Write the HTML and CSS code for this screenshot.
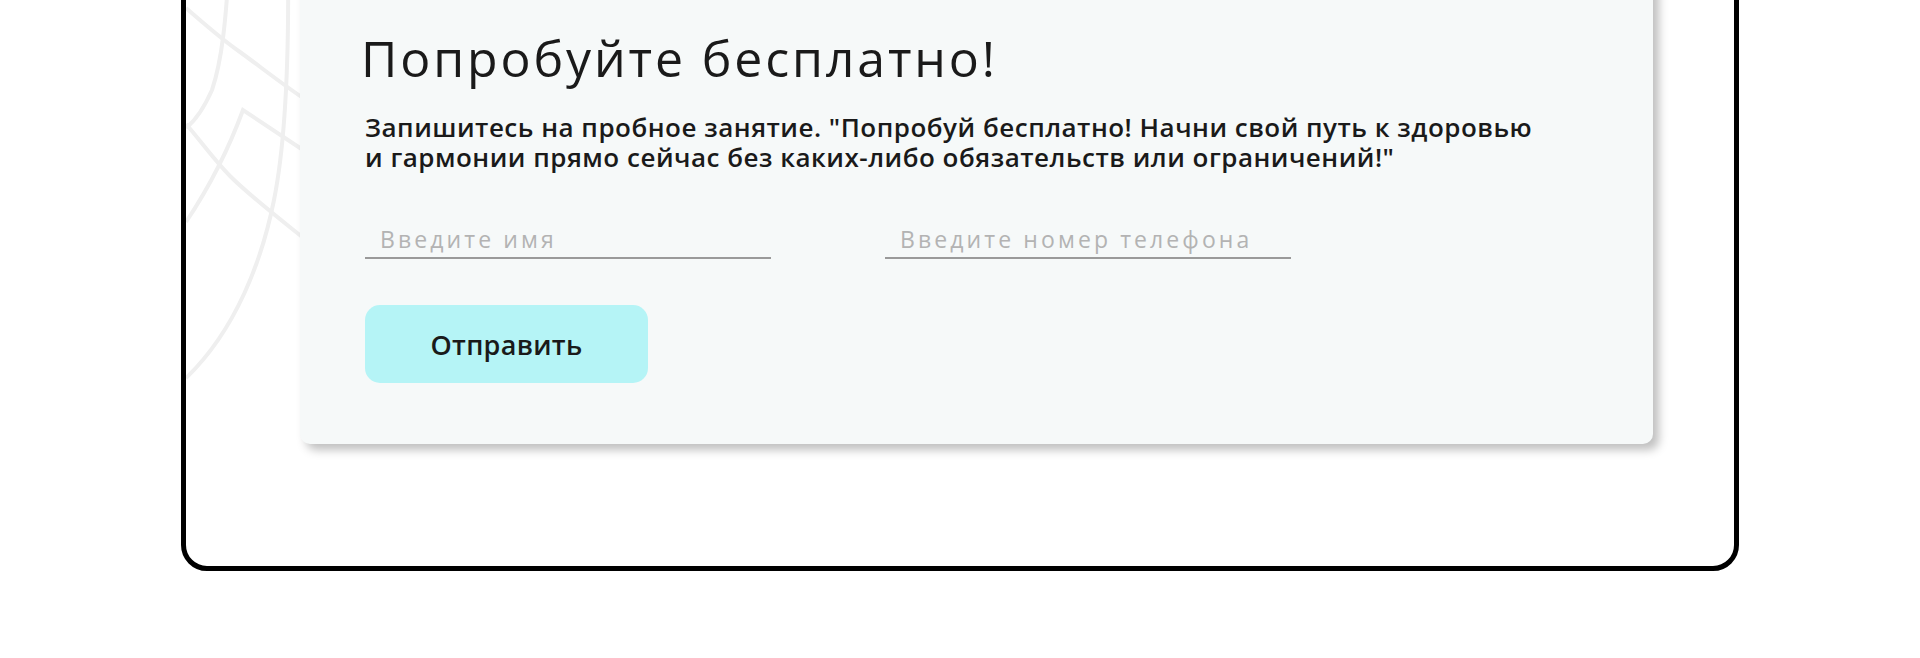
FILE: index.html
```html
<!DOCTYPE html>
<html lang="ru">
<head>
  <meta charset="UTF-8" />
  <meta name="viewport" content="width=device-width, initial-scale=1.0"/>
  <title>Попробуйте бесплатно</title>
  <link rel="stylesheet" href="styles.css">
</head>
<body>
  <section class="frame">
    <!-- decorative globe lines behind the card -->
    <svg class="deco" viewBox="186 -35 120 450" width="120" height="450" aria-hidden="true">
      <g fill="none" stroke="#efefef" stroke-width="4">
        <path d="M229 -35 C226 20 222 60 212 90 C204 108 196 120 186 128" />
        <path d="M288 -35 C289 60 286 140 274 200 C262 260 236 330 186 378" />
        <path d="M186 8 C200 20 220 38 240 52 C262 68 282 84 306 100" />
        <path d="M306 152 L243 110 C232 140 214 180 186 222" />
        <path d="M186 124 C200 140 214 160 230 176 C250 196 276 216 306 240" />
      </g>
    </svg>

    <div class="card">
      <h1>Попробуйте бесплатно!</h1>
      <p class="lead">Запишитесь на пробное занятие. "Попробуй бесплатно! Начни свой путь к здоровью и гармонии прямо сейчас без каких-либо обязательств или ограничений!"</p>
      <form class="trial-form" onsubmit="return false">
        <div class="fields">
          <input class="field" type="text" placeholder="Введите имя">
          <input class="field" type="tel" placeholder="Введите номер телефона">
        </div>
        <button class="btn" type="submit">Отправить</button>
      </form>
    </div>
  </section>
</body>
</html>
```

FILE: styles.css
```css
body {
  margin: 0;
  background: #fff;
  color: #1a1a1a;
  font-family: 'Open Sans', 'Noto Sans', sans-serif;
}
.frame {
  position: relative;
  box-sizing: border-box;
  width: 1558px;
  margin: -40px auto 0;
  padding: 0 81px 122px 114px;
  border: 5px solid #000;
  border-radius: 26px;
}
.deco {
  position: absolute;
  left: 0;
  top: 0;
}
.card {
  position: relative;
  background: #f6f9f9;
  border-radius: 10px;
  box-shadow: 6px 6px 10px rgba(0, 0, 0, 0.25);
  padding: 63px 62px 61px 65px;
}
h1 {
  margin: 0 0 0 -4px;
  font-size: 50px;
  font-weight: 400;
  line-height: 60px;
  letter-spacing: 2.85px;
}
.lead {
  max-width: 1180px;
  margin: 24px 0 0;
  font-size: 26px;
  font-weight: 600;
  line-height: 30px;
  letter-spacing: 0.5px;
}
.fields {
  display: flex;
  gap: 114px;
  margin-top: 52px;
}
.field {
  width: 406px;
  box-sizing: border-box;
  padding: 0 15px 3px;
  border: none;
  border-bottom: 2px solid #9a9a9a;
  background: transparent;
  font-family: inherit;
  font-size: 23px;
  line-height: 30px;
  letter-spacing: 3.1px;
  color: #1a1a1a;
  outline: none;
}
.field::placeholder {
  color: #b3b3b3;
}
.btn {
  display: block;
  width: 283px;
  height: 78px;
  margin-top: 46px;
  border: none;
  border-radius: 15px;
  background: #b5f4f6;
  color: #1a1a1a;
  font-family: inherit;
  font-size: 27px;
  font-weight: 600;
  letter-spacing: 0.3px;
  cursor: pointer;
}
```
